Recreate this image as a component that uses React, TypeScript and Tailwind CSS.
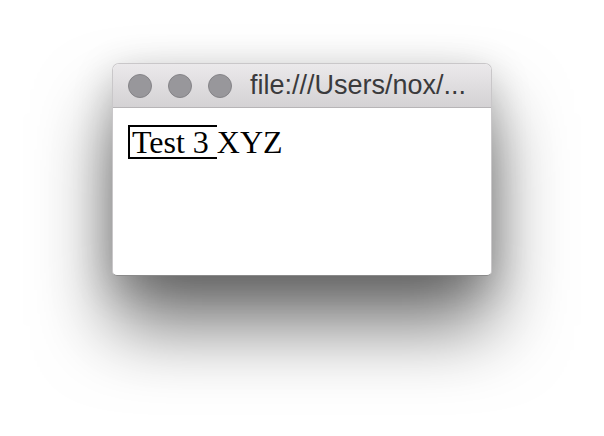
export default function App() {
  return (
    <div className="min-h-[436px] w-[604px] bg-white pl-[112px] pt-[63px]">
      {/* Window */}
      <div className="flex h-[213px] w-[380px] flex-col overflow-hidden rounded-t-[7px] rounded-b-[5px] border border-[#c9c7c9] border-b-[#8a8a8a] bg-white shadow-[0_50px_75px_0_rgba(0,0,0,0.55),0_10px_40px_0_rgba(0,0,0,0.2)]">
        {/* Title bar */}
        <div className="flex h-[44px] shrink-0 items-center border-b border-[#b7b5b7] bg-gradient-to-b from-[#ebe9eb] to-[#d4d2d4] pl-[15px]">
          <div className="flex gap-[16px]">
            <span className="h-[24px] w-[24px] rounded-full border border-[#858488] bg-[#98979b]" />
            <span className="h-[24px] w-[24px] rounded-full border border-[#858488] bg-[#98979b]" />
            <span className="h-[24px] w-[24px] rounded-full border border-[#858488] bg-[#98979b]" />
          </div>
          <span className="ml-[18px] whitespace-nowrap font-['Liberation_Sans',Arial,sans-serif] text-[27px] leading-none text-[#3a3a3c]">
            file:///Users/nox/...
          </span>
        </div>

        {/* Content */}
        <div className="flex-1 pl-[15px] pt-[17px] font-['Liberation_Serif','Times_New_Roman',serif] text-[32px] leading-[30px] text-black">
          <span className="inline-block border-y-2 border-l-2 border-black pl-[2px]">Test 3&nbsp;</span>
          <span>XYZ</span>
        </div>
      </div>
    </div>
  );
}
